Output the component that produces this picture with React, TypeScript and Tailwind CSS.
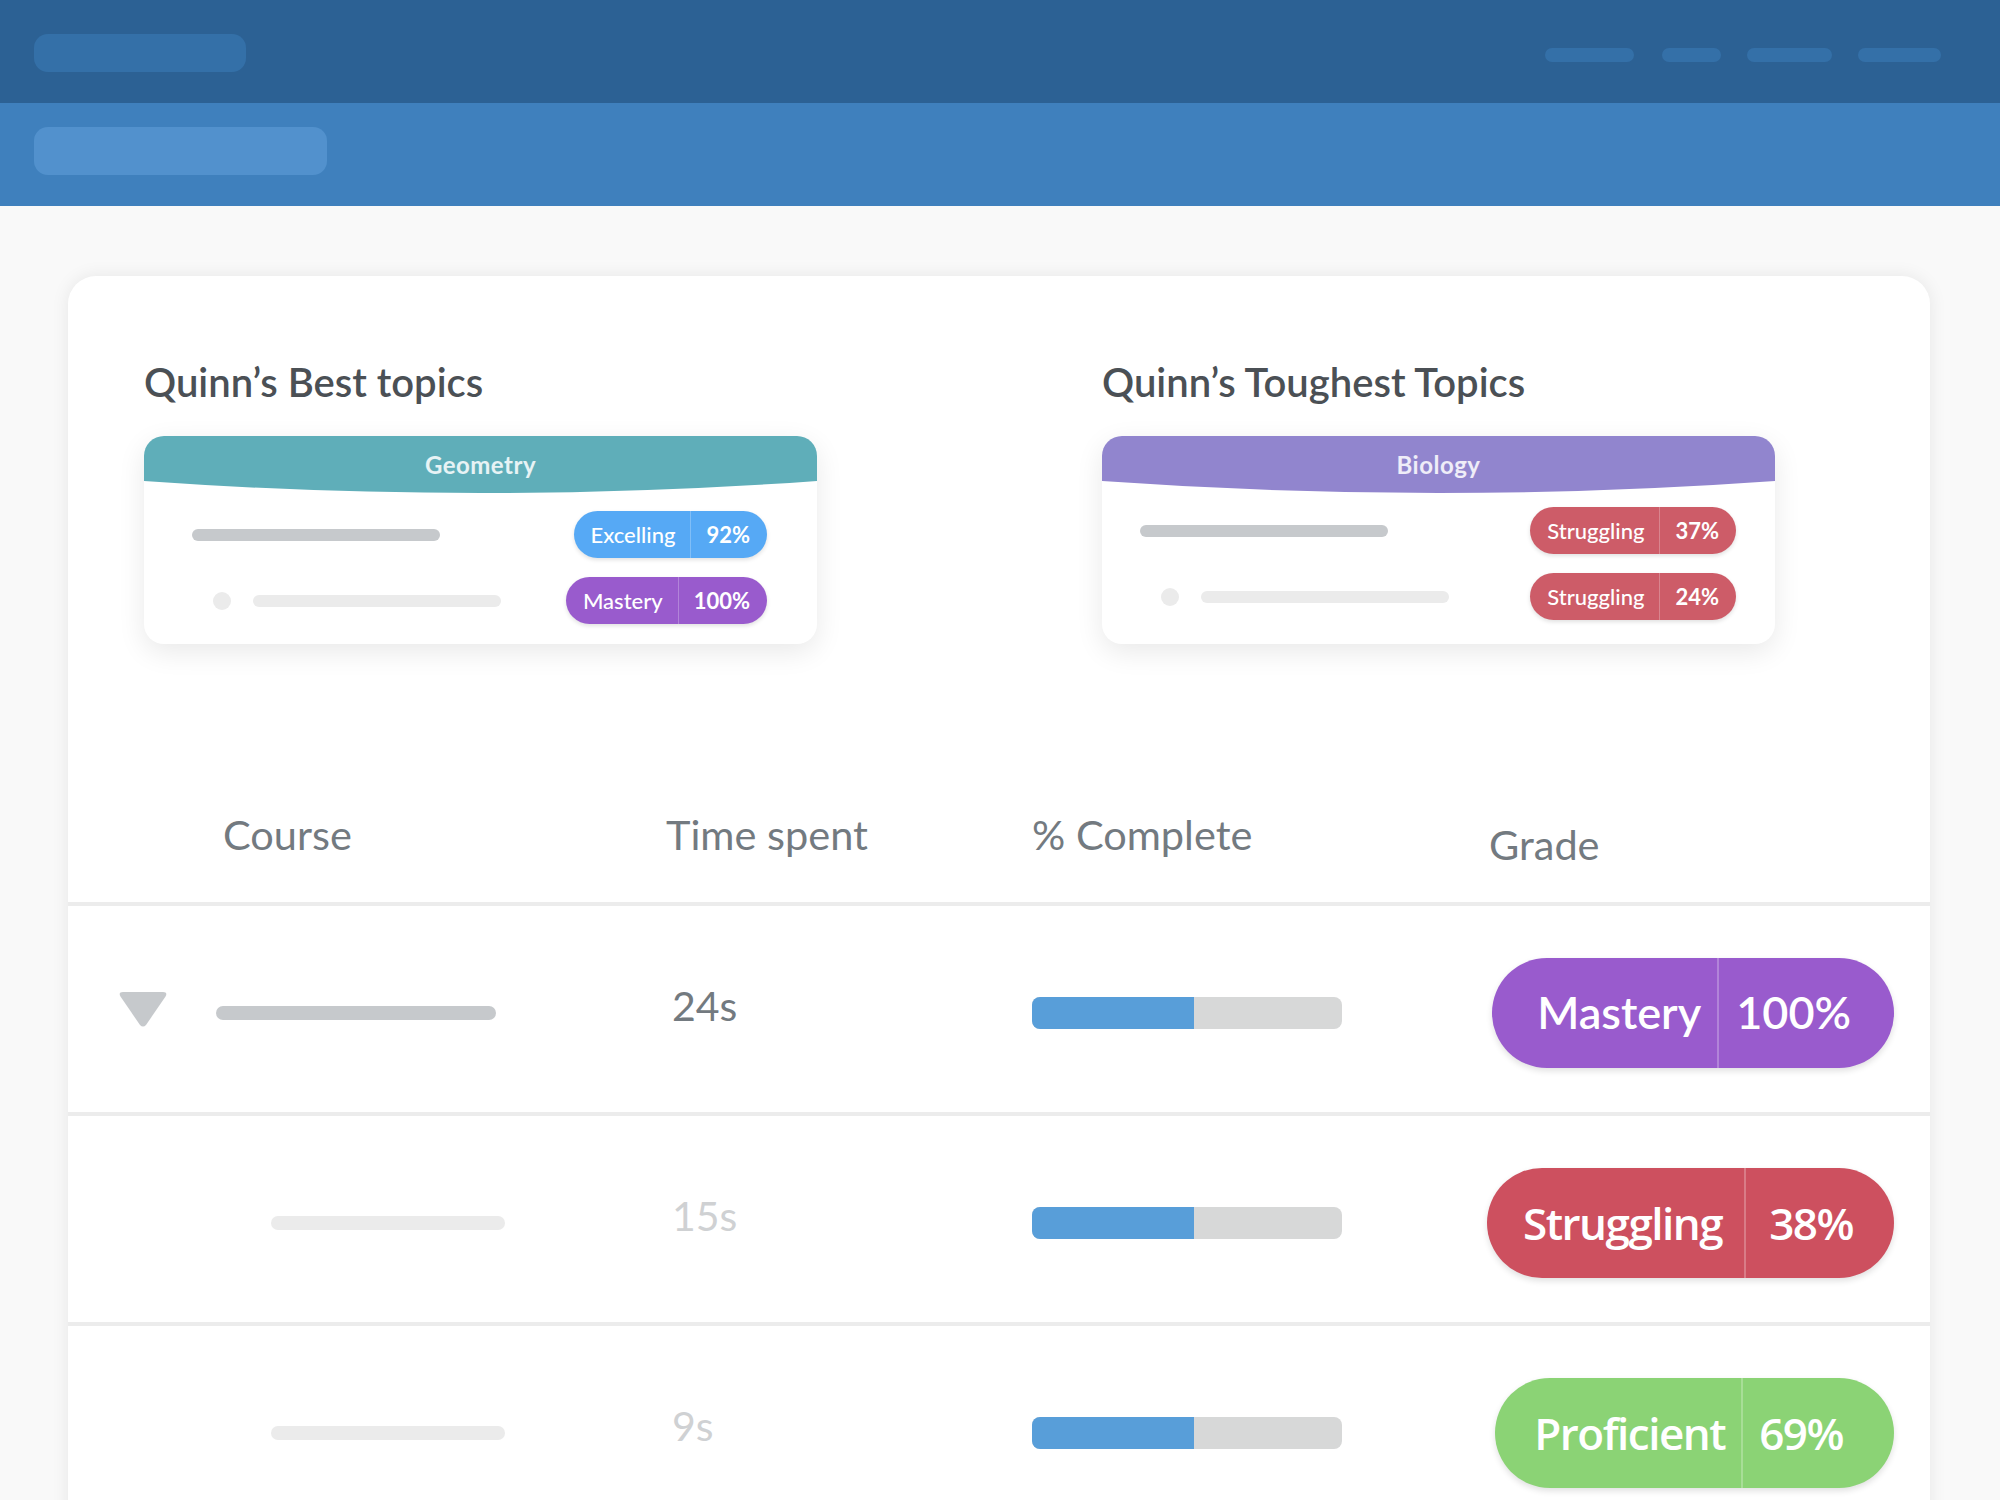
import React from 'react';

const lato = "font-['Lato','Liberation_Sans',sans-serif]";

type Small = { label: string; pct: string; bg: string };
type TopicCard = {
  title: string;
  heading: string;
  fill: string;
  pad: string;
  rows: Small[];
};

const topics: TopicCard[] = [
  {
    title: 'Quinn’s Best topics',
    heading: 'Geometry',
    fill: '#5faeb9',
    pad: 'pl-[48px] pr-[50px] pt-[18px]',
    rows: [
      { label: 'Excelling', pct: '92%', bg: 'bg-[#56a9f5]' },
      { label: 'Mastery', pct: '100%', bg: 'bg-[#995bcd]' },
    ],
  },
  {
    title: 'Quinn’s Toughest Topics',
    heading: 'Biology',
    fill: '#9185ce',
    pad: 'pl-[38px] pr-[39px] pt-[14px]',
    rows: [
      { label: 'Struggling', pct: '37%', bg: 'bg-[#cd5c68]' },
      { label: 'Struggling', pct: '24%', bg: 'bg-[#cd5c68]' },
    ],
  },
];

const SmallPill = ({ p }: { p: Small }) => (
  <div className={`flex h-[47px] items-stretch rounded-full text-white shadow-[0_2px_4px_rgba(0,0,0,0.12)] ${p.bg}`}>
    <span className="flex items-center pl-[17px] pr-[15px] text-[22px] font-medium">{p.label}</span>
    <span className="w-px bg-white/25" />
    <span className="flex items-center pl-[15px] pr-[17px] text-[22px] font-bold">{p.pct}</span>
  </div>
);

const Topic = ({ t }: { t: TopicCard }) => (
  <div className="flex flex-col">
    <h2 className="text-[40px] font-semibold leading-none text-[#4b5055]">{t.title}</h2>
    <div className="mt-[34px] w-[673px] h-[208px] overflow-hidden rounded-[20px] bg-white shadow-[0_8px_28px_rgba(0,0,0,0.09)]">
      <div className="relative flex h-[57px] items-center justify-center">
        <svg className="absolute inset-0 h-full w-full" viewBox="0 0 673 57" preserveAspectRatio="none">
          <path d="M0 0 H673 V45 Q336.5 69 0 45 Z" fill={t.fill} />
        </svg>
        <span className="relative text-[24px] font-bold tracking-[0.5px] text-white/85">{t.heading}</span>
      </div>
      <div className={`flex flex-col gap-[19px] ${t.pad}`}>
        {t.rows.map((r, i) => (
          <div key={i} className="flex items-center justify-between">
            {i === 0 ? (
              <div className="h-[12px] w-[248px] rounded-full bg-[#c6c9cc]" />
            ) : (
              <div className="flex items-center gap-[22px] pl-[21px]">
                <div className="h-[18px] w-[18px] rounded-full bg-[#ebebeb]" />
                <div className="h-[12px] w-[248px] rounded-full bg-[#ebebeb]" />
              </div>
            )}
            <SmallPill p={r} />
          </div>
        ))}
      </div>
    </div>
  </div>
);

type Row = {
  lead: boolean;
  time: string;
  label: string;
  pct: string;
  bg: string;
  font: string;
  labelPad: string;
  pctPad: string;
};

const sourceLike = "font-['Open_Sans','Noto_Sans',sans-serif] font-semibold text-[44px] tracking-[-1.5px]";

const rows: Row[] = [
  { lead: true, time: '24s', label: 'Mastery', pct: '100%', bg: 'bg-[#995bcd]', font: `${lato} font-semibold text-[45px]`, labelPad: 'pl-[45px] pr-[16px]', pctPad: 'pl-[17px] pr-[43px]' },
  { lead: false, time: '15s', label: 'Struggling', pct: '38%', bg: 'bg-[#cd505f]', font: sourceLike, labelPad: 'pl-[36px] pr-[22px]', pctPad: 'pl-[23px] pr-[41px]' },
  { lead: false, time: '9s', label: 'Proficient', pct: '69%', bg: 'bg-[#8bd375]', font: sourceLike, labelPad: 'pl-[39px] pr-[16px]', pctPad: 'pl-[16px] pr-[51px]' },
];

const BigPill = ({ r }: { r: Row }) => (
  <div className={`flex h-[110px] items-stretch rounded-full text-white shadow-[0_3px_6px_rgba(0,0,0,0.12)] ${r.bg} ${r.font}`}>
    <span className={`flex items-center ${r.labelPad}`}>{r.label}</span>
    <span className="w-[2px] bg-white/25" />
    <span className={`flex items-center ${r.pctPad}`}>{r.pct}</span>
  </div>
);

export default function App() {
  return (
    <div className={`h-[1500px] w-[2000px] overflow-hidden bg-[#f9f9f9] ${lato}`}>
      {/* top nav */}
      <div className="flex h-[103px] items-start justify-between bg-[#2c6194] pl-[34px] pr-[59px]">
        <div className="mt-[34px] h-[38px] w-[212px] rounded-[14px] bg-[#3470a8]" />
        <div className="mt-[48px] flex gap-[26px]">
          <div className="h-[14px] w-[89px] rounded-full bg-[#3470a8]" />
          <div className="ml-[2px] h-[14px] w-[59px] rounded-full bg-[#3470a8]" />
          <div className="h-[14px] w-[85px] rounded-full bg-[#3470a8]" />
          <div className="h-[14px] w-[83px] rounded-full bg-[#3470a8]" />
        </div>
      </div>
      <div className="flex h-[103px] items-start bg-[#3f80bd] pl-[34px]">
        <div className="mt-[24px] h-[48px] w-[293px] rounded-[14px] bg-[#5291cd]" />
      </div>

      {/* main card */}
      <div className="pt-[70px] pl-[68px]">
        <div className="w-[1862px] rounded-t-[28px] bg-white shadow-[0_0_18px_rgba(0,0,0,0.08)]">
          <div className="grid grid-cols-[958px_1fr] pl-[76px] pt-[86px]">
            {topics.map((t) => (
              <Topic key={t.heading} t={t} />
            ))}
          </div>

          {/* table */}
          <div className="mt-[136px] grid h-[126px] grid-cols-[598px_366px_310px_1fr] items-start border-b-4 border-[#ececec] pt-[34px] text-[41.5px] leading-none text-[#737a80]">
            <div className="pl-[155px]">Course</div>
            <div>Time spent</div>
            <div>% Complete</div>
            <div className="mt-[10px] pl-[147px]">Grade</div>
          </div>
          {rows.map((r) => (
            <div key={r.time} className="grid h-[210px] grid-cols-[598px_366px_310px_1fr] items-center border-b-4 border-[#ececec] pt-[8px]">
              <div className="flex items-center">
                {r.lead ? (
                  <div className="flex items-center gap-[48px] pl-[50px]">
                    <svg width="50" height="35" viewBox="0 0 50 35" className="-mt-[7px]">
                      <path d="M5 0 H45 Q50 0 47.5 4.5 L28 33 Q25 36 22 33 L2.5 4.5 Q0 0 5 0 Z" fill="#c6c9cc" />
                    </svg>
                    <div className="h-[14px] w-[280px] rounded-full bg-[#c6c9cc]" />
                  </div>
                ) : (
                  <div className="ml-[203px] h-[14px] w-[234px] rounded-full bg-[#ebebeb]" />
                )}
              </div>
              <div className={`mb-[15px] pl-[6px] text-[41px] leading-none ${r.lead ? 'text-[#737a80]' : 'text-[#cfd1d3]'}`}>{r.time}</div>
              <div className="flex h-[32px] w-[310px] overflow-hidden rounded-[8px] bg-[#d7d8d8]">
                <div className="h-full w-[162px] bg-[#589ed9]" />
              </div>
              <div className="flex justify-end pr-[36px]">
                <BigPill r={r} />
              </div>
            </div>
          ))}
        </div>
      </div>
    </div>
  );
}
